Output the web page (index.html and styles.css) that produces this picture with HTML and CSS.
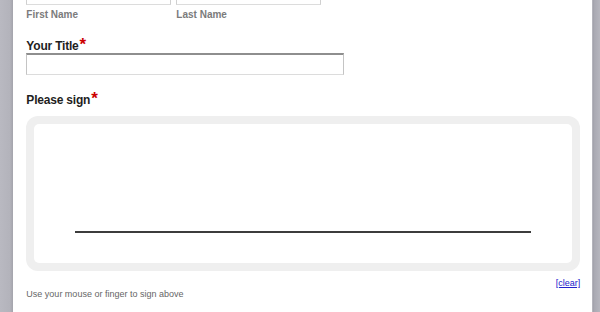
FILE: index.html
```html
<!DOCTYPE html>
<html>
<head>
<meta charset="utf-8">
<link rel="stylesheet" href="styles.css">
</head>
<body>
<div class="page">
  <div class="rail-left"></div>
  <div class="main">
    <div class="name-row">
      <div class="name-field">
        <div class="input name-input"></div>
        <div class="sub-label">First Name</div>
      </div>
      <div class="name-field">
        <div class="input name-input"></div>
        <div class="sub-label">Last Name</div>
      </div>
    </div>
    <div class="field-label title-label">Your Title<span class="req">*</span></div>
    <div class="input title-input"></div>
    <div class="field-label sign-label">Please sign<span class="req">*</span></div>
    <div class="sig-box">
      <div class="sig-inner">
        <div class="sig-line"></div>
      </div>
    </div>
    <div class="clear-row"><a class="clear-link" href="#">[clear]</a></div>
    <div class="hint">Use your mouse or finger to sign above</div>
  </div>
  <div class="rail-right"></div>
</div>
</body>
</html>
```
FILE: styles.css
```css
html, body {
  margin: 0;
  padding: 0;
  height: 100%;
  overflow: hidden;
}
body {
  font-family: "Liberation Sans", Arial, sans-serif;
  background: #fff;
}
.page {
  display: flex;
  height: 312px;
}
.rail-left {
  width: 14px;
  background: linear-gradient(to right, #b9b9c1 0, #b3b3bb 10px, #a9a9b1 12px, #9e9ea6 14px);
}
.rail-right {
  width: 8px;
  background: linear-gradient(to right, #c9c9cf 0, #9f9fa8 1px, #a9a9b2 2px, #b6b6be 8px);
}
.main {
  flex: 1;
  background: #fff;
  padding-left: 13px;
  padding-right: 12px;
}
.name-row {
  display: flex;
  gap: 5px;
  margin-top: -16px;
}
.name-field {
  width: 145px;
}
.input {
  box-sizing: border-box;
  background: #fff;
  border: 1px solid #d4d4d4;
}
.name-input {
  height: 21px;
  border-color: #c8c8c8 #d0d0d0 #dcdcdc #d0d0d0;
}
.sub-label {
  margin-top: 4px;
  font-size: 10px;
  font-weight: bold;
  color: #7b7b7b;
  line-height: 12px;
}
.field-label {
  font-size: 12px;
  font-weight: bold;
  color: #1e1e1e;
  line-height: 14px;
  height: 14px;
  letter-spacing: -0.2px;
}
.req {
  color: #cc0000;
  font-size: 17px;
  position: relative;
  top: 0;
  margin-left: 1px;
  line-height: 0;
  vertical-align: baseline;
}
.title-label {
  margin-top: 18px;
}
.title-input {
  width: 318px;
  height: 22px;
  margin-top: 0;
  border-width: 2px 1px 1px 1px;
  border-color: #8e8e8e #c4c4c4 #dcdcdc #c4c4c4;
}
.sign-label {
  margin-top: 18px;
}
.sig-box {
  margin-top: 9px;
  width: 554px;
  box-sizing: border-box;
  height: 155px;
  background: #efefef;
  border-radius: 12px;
  padding: 8px;
}
.sig-inner {
  background: #fff;
  border-radius: 5px;
  height: 100%;
  box-sizing: border-box;
  padding-top: 107px;
  padding-left: 41px;
  padding-right: 41px;
}
.sig-line {
  height: 2px;
  background: #3c3c3c;
}
.clear-row {
  width: 554px;
  display: flex;
  justify-content: flex-end;
  margin-top: 7px;
  line-height: 10px;
}
.clear-link {
  font-size: 9px;
  color: #2222cc;
  text-decoration: underline;
}
.hint {
  margin-top: 0;
  font-size: 9px;
  color: #666;
  line-height: 12px;
}
```
